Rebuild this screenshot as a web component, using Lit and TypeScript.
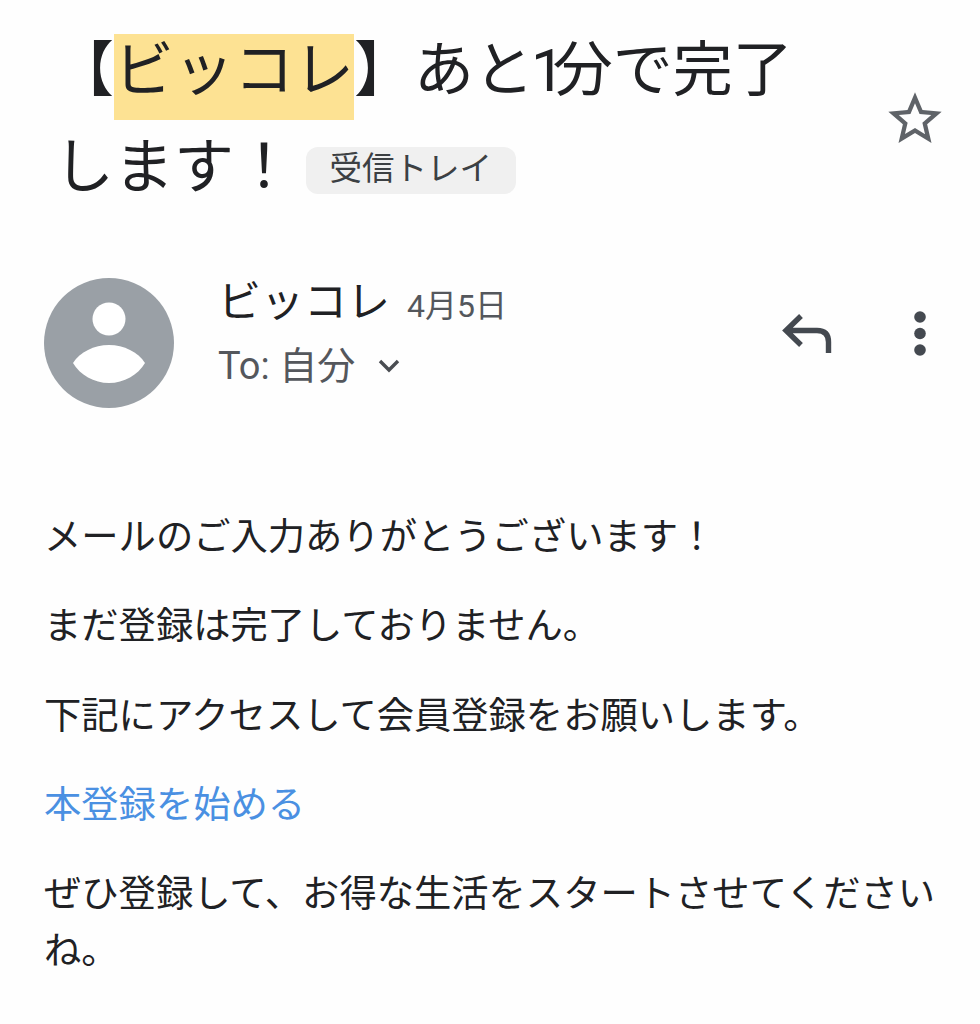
import { LitElement, css, html } from "lit";
import { customElement } from "lit/decorators.js";

@customElement("app-root")
export class AppRoot extends LitElement {
  static styles = css`
    :host {
      display: block;
      width: 980px;
      height: 1024px;
      overflow: hidden;
      background: #fefefe;
      color: #202124;
      font-family: Roboto, "Noto Sans CJK JP", sans-serif;
    }
    .subject {
      display: flex;
      align-items: center;
      justify-content: space-between;
      padding: 22px 33px 0 54px;
    }
    .title {
      flex: none;
      width: 780px;
      margin: 0;
      font-size: 60px;
      font-weight: 400;
      line-height: 97px;
    }
    .hl {
      padding: 1px 0 14px;
      background: #fde293;
    }
    /* the digit sits tight against the next kanji */
    .tight {
      margin-left: -3px;
      letter-spacing: -12px;
    }
    .badge {
      display: inline-block;
      vertical-align: 8px;
      margin-left: 12px;
      padding: 0 23.5px;
      height: 47px;
      line-height: 45px;
      font-size: 32.5px;
      color: #3c4043;
      background: #f0f0f0;
      border-radius: 12px;
    }
    .star {
      width: 64px;
      height: 64px;
      flex: none;
    }
    .sender {
      display: flex;
      align-items: center;
      padding: 55px 53px 0 44px;
    }
    .avatar {
      width: 130px;
      height: 130px;
      flex: none;
    }
    .who {
      flex: 1;
      margin-left: 44px;
      padding-bottom: 20px;
    }
    .name-row {
      display: flex;
      align-items: baseline;
      gap: 17px;
      line-height: 62px;
    }
    .name {
      font-size: 43px;
    }
    .date {
      font-size: 32px;
      color: #54575c;
    }
    .to-row {
      display: flex;
      align-items: center;
      gap: 22px;
      font-size: 38px;
      line-height: 58px;
      color: #54575c;
    }
    .chev {
      width: 24px;
      height: 16px;
    }
    .actions {
      display: flex;
      align-items: center;
      gap: 81px;
      padding-bottom: 19px;
    }
    .reply {
      width: 50px;
      height: 40px;
    }
    .dots {
      width: 14px;
      height: 46px;
    }
    .body {
      padding: 94px 40px 0 44px;
      font-size: 37.3px;
      line-height: 57px;
    }
    .body p {
      margin: 0 0 32.3px;
    }
    .link {
      color: #4a90e2;
    }
  `;

  render() {
    return html`
      <div class="subject">
        <h1 class="title">【<span class="hl">ビッコレ</span>】あと<span class="tight">1</span>分で完了します！<span class="badge">受信トレイ</span></h1>
        <svg class="star" viewBox="0 0 24 24">
          <path fill="#5f6368" d="M22 9.24l-7.19-.62L12 2 9.19 8.63 2 9.24l5.46 4.73L5.82 21 12 17.27 18.18 21l-1.63-7.03L22 9.24zM12 15.4l-3.76 2.27 1-4.28-3.32-2.88 4.38-.38L12 6.1l1.71 4.04 4.38.38-3.32 2.88 1 4.28L12 15.4z"/>
        </svg>
      </div>
      <div class="sender">
        <svg class="avatar" viewBox="0 0 130 130">
          <circle cx="65" cy="65" r="65" fill="#9aa0a6"/>
          <circle cx="65" cy="41" r="16.5" fill="#fff"/>
          <path fill="#fff" d="M29 85C36 74 50 67 65 67S94 74 101 85C94 97 80 105 65 105S36 97 29 85Z"/>
        </svg>
        <div class="who">
          <div class="name-row"><span class="name">ビッコレ</span><span class="date">4月5日</span></div>
          <div class="to-row">
            <span>To: 自分</span>
            <svg class="chev" viewBox="0 0 24 16">
              <path d="M3 3L12 12L21 3" fill="none" stroke="#4a4d52" stroke-width="3.4"/>
            </svg>
          </div>
        </div>
        <div class="actions">
          <svg class="reply" viewBox="0 0 50 40">
            <path d="M19 2L4 16.5L19 31M4 16.5H35Q46.5 16.5 46.5 28V39" fill="none" stroke="#444950" stroke-width="5.4"/>
          </svg>
          <svg class="dots" viewBox="0 0 14 46">
            <circle cx="7" cy="6" r="5.8" fill="#444950"/>
            <circle cx="7" cy="22.5" r="5.8" fill="#444950"/>
            <circle cx="7" cy="39" r="5.8" fill="#444950"/>
          </svg>
        </div>
      </div>
      <div class="body">
        <p>メールのご入力ありがとうございます！</p>
        <p>まだ登録は完了しておりません。</p>
        <p>下記にアクセスして会員登録をお願いします。</p>
        <p class="link">本登録を始める</p>
        <p>ぜひ登録して、お得な生活をスタートさせてくださいね。</p>
      </div>
    `;
  }
}
